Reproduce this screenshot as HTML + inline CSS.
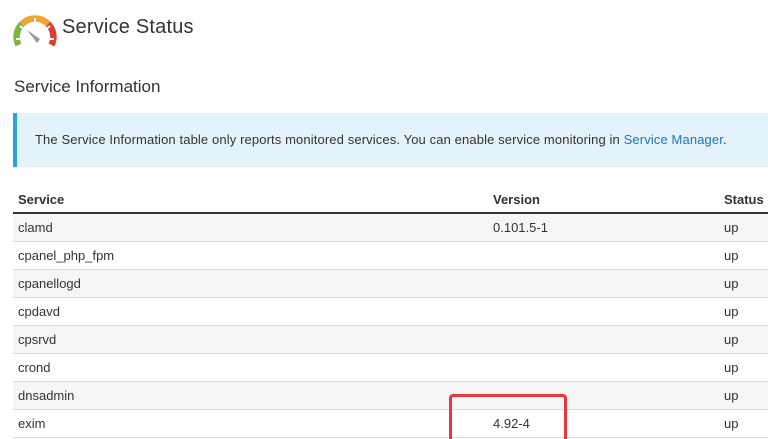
<!DOCTYPE html>
<html><head><style>
html,body{margin:0;width:768px;height:439px;overflow:hidden}
body{background:#fff;font-family:"Liberation Sans",sans-serif;color:#333;position:relative}
.t{position:absolute}
h1{position:absolute;left:62px;top:16px;margin:0;font-weight:normal;font-size:20px;color:#333;letter-spacing:0.2px}
h2{position:absolute;left:14px;top:77px;margin:0;font-weight:normal;font-size:17px;color:#333}
.info{position:absolute;left:13px;top:113px;width:755px;height:54px;background:#e4f2fa;border-left:4px solid #27a3dd;box-sizing:border-box}
.info span{position:absolute;left:18px;top:19px;font-size:13px;color:#333;white-space:nowrap;letter-spacing:0.12px}
.info a{color:#1f76b7;text-decoration:none}
.hdr{position:absolute;left:13px;top:191px;width:755px;height:21px;border-bottom:2px solid #333;font-weight:bold;font-size:13px}
.row{position:absolute;left:13px;width:755px;height:27px;border-bottom:1px solid #ddd;font-size:13px}
.row.s{background:#f6f6f6}
.c1{position:absolute;left:5px;top:6px}.c2{position:absolute;left:480px;top:6px}.c3{position:absolute;left:711px;top:6px}
.hdr .c1,.hdr .c2,.hdr .c3{top:1px}
.box{position:absolute;left:449px;top:394px;width:118px;height:60px;border:3px solid #e8383b;border-radius:4px;box-sizing:border-box}
</style></head><body>
<svg class="t" style="left:12px;top:10px" width="48" height="40" viewBox="0 0 48 40">
<path d="M6.5 35 A18 18 0 0 1 10 14" stroke="#7bb544" stroke-width="6.5" fill="none"/>
<path d="M10 14 A18 18 0 0 1 36 14" stroke="#f0a630" stroke-width="6.5" fill="none"/>
<path d="M36 14 A18 18 0 0 1 39.5 35" stroke="#dd3e2f" stroke-width="6.5" fill="none"/>
<g stroke="#fff" stroke-width="2"><line x1="4" y1="29" x2="10" y2="29"/><line x1="8" y1="16" x2="13" y2="20"/><line x1="23" y1="8" x2="23" y2="14"/><line x1="38" y1="16" x2="33" y2="20"/><line x1="42" y1="29" x2="36" y2="29"/></g>
<path d="M15 20 L28 29 L25 33 Z" fill="#999"/>
</svg>
<h1>Service Status</h1>
<h2>Service Information</h2>
<div class="info"><span>The Service Information table only reports monitored services. You can enable service monitoring in <a>Service Manager</a>.</span></div>
<div class="hdr"><span class="c1">Service</span><span class="c2">Version</span><span class="c3">Status</span></div>
<div class="row s" style="top:214px"><span class="c1">clamd</span><span class="c2">0.101.5-1</span><span class="c3">up</span></div>
<div class="row" style="top:242px"><span class="c1">cpanel_php_fpm</span><span class="c3">up</span></div>
<div class="row s" style="top:270px"><span class="c1">cpanellogd</span><span class="c3">up</span></div>
<div class="row" style="top:298px"><span class="c1">cpdavd</span><span class="c3">up</span></div>
<div class="row s" style="top:326px"><span class="c1">cpsrvd</span><span class="c3">up</span></div>
<div class="row" style="top:354px"><span class="c1">crond</span><span class="c3">up</span></div>
<div class="row s" style="top:382px"><span class="c1">dnsadmin</span><span class="c3">up</span></div>
<div class="row" style="top:410px"><span class="c1">exim</span><span class="c2">4.92-4</span><span class="c3">up</span></div>
<div class="box"></div>
</body></html>
